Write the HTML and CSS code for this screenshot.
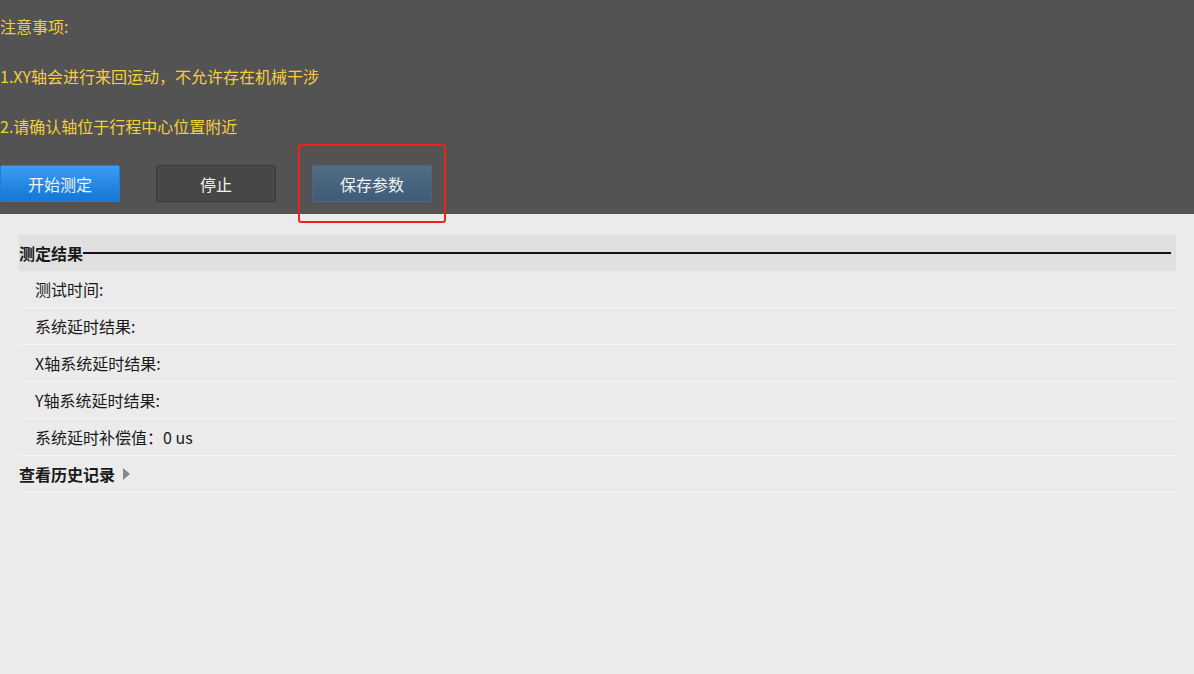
FILE: index.html
```html
<!DOCTYPE html>
<html lang="zh-CN">
<head>
  <meta charset="UTF-8" />
  <meta name="viewport" content="width=device-width, initial-scale=1.0" />
  <title>系统延时测定</title>
  <link rel="stylesheet" href="styles.css">
</head>
<body>
  <div class="notice">
    <p class="tip">注意事项:</p>
    <p class="tip">1.XY轴会进行来回运动，不允许存在机械干涉</p>
    <p class="tip">2.请确认轴位于行程中心位置附近</p>
    <div class="actions">
      <button class="btn start" id="start">开始测定</button>
      <button class="btn stop" id="stop">停止</button>
      <button class="btn save" id="save">保存参数</button>
    </div>
    <div class="highlight"></div>
  </div>
  <div class="result">
    <div class="section-title">
      <span>测定结果</span>
      <span class="rule"></span>
    </div>
    <div class="row">测试时间:</div>
    <div class="row">系统延时结果:</div>
    <div class="row">X轴系统延时结果:</div>
    <div class="row">Y轴系统延时结果:</div>
    <div class="row">系统延时补偿值：0 us</div>
    <div class="row history">查看历史记录 <span class="arrow"></span></div>
  </div>
</body>
</html>
```

FILE: styles.css
```css
body {
  margin: 0;
  background-color: #ebebeb;
  font-family: "Noto Sans CJK SC", "Noto Sans", sans-serif;
  font-size: 16px;
  color: #1a1a1a;
}

.notice {
  position: relative;
  background-color: #535353;
  padding: 1px 0 12px 0;
}

.tip {
  margin: 0;
  height: 50px;
  line-height: 50px;
  color: #f4cf3c;
  white-space: nowrap;
}

.actions {
  display: flex;
  gap: 36px;
  margin-top: 14px;
}

.btn {
  width: 120px;
  height: 37px;
  font-family: inherit;
  font-size: 16px;
  color: #f2f2f2;
  border-radius: 2px;
  cursor: pointer;
  padding: 0;
}

.start {
  background: linear-gradient(#3a9cf0, #1476d6);
  border: 1px solid #1f7fd8;
}

.stop {
  background-color: #474747;
  border: 1px solid #3a3a3a;
}

.save {
  background: linear-gradient(#536d86, #3f5b77);
  border: 1px solid #4a6580;
}

.highlight {
  position: absolute;
  left: 298px;
  top: 144px;
  width: 144px;
  height: 75px;
  border: 2px solid #f0221c;
  border-radius: 3px;
}

.result {
  padding: 21px 18px 0 19px;
}

.section-title {
  display: flex;
  align-items: center;
  height: 36px;
  background-color: #e0e0e0;
  font-weight: bold;
}

.rule {
  flex: 1;
  height: 2px;
  background-color: #111;
  margin-right: 5px;
}

.row {
  height: 36px;
  line-height: 36px;
  padding-left: 16px;
  border-bottom: 1px solid #f5f5f5;
}

.history {
  padding-left: 0;
  font-weight: bold;
  display: flex;
  align-items: center;
  gap: 8px;
}

.arrow {
  width: 0;
  height: 0;
  border-top: 6px solid transparent;
  border-bottom: 6px solid transparent;
  border-left: 7px solid #888;
}
```
